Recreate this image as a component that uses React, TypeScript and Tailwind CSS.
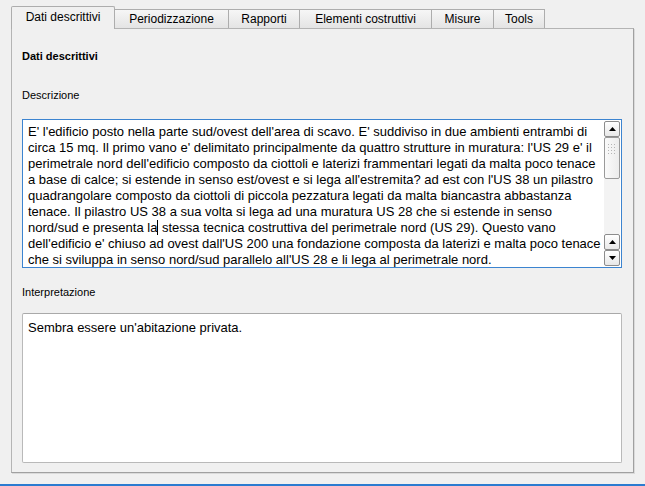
import React from 'react';

const TABS = [
  { label: 'Dati descrittivi', w: 'w-[104px]' },
  { label: 'Periodizzazione', w: 'w-[115px]' },
  { label: 'Rapporti', w: 'w-[72px]' },
  { label: 'Elementi costruttivi', w: 'w-[133px]' },
  { label: 'Misure', w: 'w-[63px]' },
  { label: 'Tools', w: 'w-[52px]' },
];

const DESCRIZIONE = [
  "E' l'edificio posto nella parte sud/ovest dell'area di scavo. E' suddiviso in due ambienti entrambi di",
  "circa 15 mq. Il primo vano e' delimitato principalmente da quattro strutture in muratura: l'US 29 e' il",
  "perimetrale nord dell'edificio composto da ciottoli e laterizi frammentari legati da malta poco tenace",
  "a base di calce; si estende in senso est/ovest e si lega all'estremita? ad est con l'US 38 un pilastro",
  "quadrangolare composto da ciottoli di piccola pezzatura legati da malta biancastra abbastanza",
  "tenace. Il pilastro US 38 a sua volta si lega ad una muratura US 28 che si estende in senso",
];

const Arrow = ({ up }: { up: boolean }) => (
  <svg width="7" height="4" viewBox="0 0 7 4">
    {up ? <path d="M0 4 L3.5 0 L7 4 Z" fill="#000" /> : <path d="M0 0 L3.5 4 L7 0 Z" fill="#000" />}
  </svg>
);

const ScrollButton = ({ up }: { up: boolean }) => (
  <div className="h-[16px] w-[16px] flex items-center justify-center rounded-[2px] border border-[#8c8c8c] bg-linear-to-b from-[#ffffff] to-[#e8e8e8]">
    <Arrow up={up} />
  </div>
);

const Grip = () => (
  <svg width="8" height="10" viewBox="0 0 8 10">
    {[0, 1, 2, 3].map((r) =>
      [0, 1, 2].map((c) => (
        <rect key={`${r}-${c}`} x={c * 3} y={r * 3} width="1" height="1" fill="#b5b5b5" />
      ))
    )}
  </svg>
);

export default function App() {
  return (
    <div className="w-[645px] h-[486px] bg-[#f0f0f0] flex flex-col overflow-hidden text-black" style={{ fontFamily: '"Liberation Sans", Arial, sans-serif' }}>
      {/* tab bar */}
      <div className="h-[28px] flex items-end pl-[11px]">
        {TABS.map((t, i) => {
          const active = i === 0;
          return (
            <div
              key={t.label}
              className={
                active
                  ? `${t.w} h-[23px] mb-[-1px] relative z-10 flex items-center justify-center border border-b-0 border-[#adadad] rounded-t-[2px] bg-[#f0f0f0] text-[12px] pb-[2px]`
                  : `${t.w} h-[19px] -ml-px flex items-center justify-center border border-b-0 border-[#adadad] bg-linear-to-b from-[#f6f6f6] to-[#e4e4e4] text-[12px]`
              }
            >
              {t.label}
            </div>
          );
        })}
      </div>

      {/* pane */}
      <div className="ml-[11px] w-[623px] h-[445px] border border-[#b4b4b4] border-r-[#a0a0a0] border-b-[#a0a0a0] shadow-[1px_1px_0_#dadada] px-[10px] flex flex-col">
        <div className="mt-[20px] h-[14px] leading-[14px] text-[11px] font-bold">Dati descrittivi</div>
        <div className="mt-[25px] h-[14px] leading-[14px] text-[11px]">Descrizione</div>

        <div className="mt-[17px] h-[149px] w-[600px] border border-[#3c84d0] bg-white flex overflow-hidden">
          <div className="flex-1 pl-[5px] pt-[4px] text-[13px] leading-[16px] whitespace-nowrap overflow-hidden">
            {DESCRIZIONE.map((l) => (
              <div key={l}>{l}</div>
            ))}
            <div>
              nord/sud e presenta la<span className="inline-block w-px h-[15px] bg-black align-middle -mt-[2px]" />{' '}stessa tecnica costruttiva del perimetrale nord (US 29). Questo vano
            </div>
            <div>dell'edificio e' chiuso ad ovest dall'US 200 una fondazione composta da laterizi e malta poco tenace</div>
            <div>che si sviluppa in senso nord/sud parallelo all'US 28 e li lega al perimetrale nord.</div>
          </div>
          {/* scrollbar */}
          <div className="w-[17px] flex flex-col pt-[1px] pb-[1px] pr-[1px]">
            <ScrollButton up />
            <div className="h-[42px] w-[16px] rounded-[2px] border border-[#9a9a9a] bg-linear-to-r from-[#fafafa] to-[#ececec] flex items-start justify-center pt-[6px]">
              <Grip />
            </div>
            <div className="flex-1 w-[16px] bg-[#f3f3f3]" />
            <ScrollButton up />
            <ScrollButton up={false} />
          </div>
        </div>

        <div className="mt-[17px] h-[14px] leading-[14px] text-[11px]">Interpretazione</div>

        <div className="mt-[14px] h-[150px] w-[600px] border border-[#b9b9b9] border-t-[#a9a9a9] rounded-[2px] bg-white pl-[5px] pt-[6px] text-[13px] leading-[16px]">
          Sembra essere un'abitazione privata.
        </div>
      </div>

      <div className="mt-auto mb-0 h-[2px] bg-[#2b7bd0]" />
    </div>
  );
}
